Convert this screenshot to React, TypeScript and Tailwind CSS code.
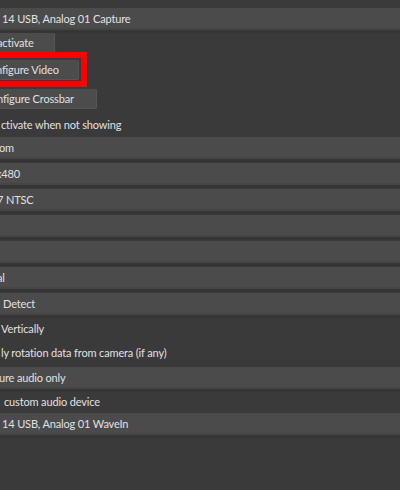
import type { ReactNode } from 'react'

// Cropped OBS "Video Capture Device" properties panel (dark theme)

function Combo({ children, className = '' }: { children?: ReactNode; className?: string }) {
  return (
    <div className={`h-[22px] shrink-0 bg-[#4b4b4b] border-b-2 border-[#454545] shadow-[0_3px_0_#353535] flex items-center overflow-hidden ${className}`}>
      {children}
    </div>
  )
}

function Button({ children, width, className = '' }: { children: ReactNode; width: string; className?: string }) {
  return (
    <div className={`h-[20px] shrink-0 ${width} bg-[#4c4c4c] border-r border-b border-[#565656] rounded-r-[2px] flex items-center overflow-hidden ${className}`}>
      {children}
    </div>
  )
}

function CheckRow({ children, className = '' }: { children: ReactNode; className?: string }) {
  return <div className={`h-[20px] shrink-0 flex items-center overflow-hidden ${className}`}>{children}</div>
}

export default function App() {
  return (
    <div className="w-[400px] h-[490px] bg-[#3a3a3a] overflow-hidden text-[11px] tracking-[-0.15px] leading-none text-[#e0e0e0] font-['Lato','Liberation_Sans',sans-serif] flex flex-col">
      {/* Device */}
      <Combo className="mt-[8px]">
        <span className="pl-[2px] whitespace-nowrap">14 USB, Analog 01 Capture</span>
      </Combo>

      {/* Buttons */}
      <Button width="w-[55px]" className="mt-[3px]">
        <span className="ml-[-3px] whitespace-nowrap">activate</span>
      </Button>

      <div className="relative mt-[7px] w-[79px]">
        <Button width="w-[79px]">
          <span className="ml-[-4px] whitespace-nowrap">nfigure Video</span>
        </Button>
        <div className="absolute top-[-8px] bottom-[-7px] left-[-12px] right-[-8px] border-[6px] border-[#ff0000]" />
      </div>

      <Button width="w-[97px]" className="mt-[9px]">
        <span className="ml-[-3px] whitespace-nowrap">nfigure Crossbar</span>
      </Button>

      <CheckRow className="mt-[5px]">
        <span className="pl-[1px] whitespace-nowrap">ctivate when not showing</span>
      </CheckRow>

      {/* Resolution / FPS / format / colour */}
      <div className="mt-[3px] flex flex-col gap-[4px]">
        <Combo>
          <span className="ml-[-1px] whitespace-nowrap">om</span>
        </Combo>
        <Combo>
          <span className="ml-[-4px] whitespace-nowrap">x480</span>
        </Combo>
        <Combo>
          <span className="ml-[-3px] whitespace-nowrap">7 NTSC</span>
        </Combo>
        <Combo />
        <Combo />
        <Combo>
          <span className="ml-[-3px] whitespace-nowrap">al</span>
        </Combo>
        <Combo>
          <span className="pl-[3px] whitespace-nowrap">Detect</span>
        </Combo>
      </div>

      <CheckRow className="mt-[3px]">
        <span className="pl-[1px] whitespace-nowrap">Vertically</span>
      </CheckRow>
      <CheckRow className="mt-[4px]">
        <span className="pl-[1px] whitespace-nowrap">ly rotation data from camera (if any)</span>
      </CheckRow>

      {/* Audio */}
      <Combo className="mt-[5px]">
        <span className="ml-[-1px] whitespace-nowrap">ure audio only</span>
      </Combo>
      <CheckRow className="mt-[2px]">
        <span className="pl-[4px] whitespace-nowrap">custom audio device</span>
      </CheckRow>
      <Combo className="mt-[2px]">
        <span className="pl-[2px] whitespace-nowrap">14 USB, Analog 01 WaveIn</span>
      </Combo>
    </div>
  )
}
